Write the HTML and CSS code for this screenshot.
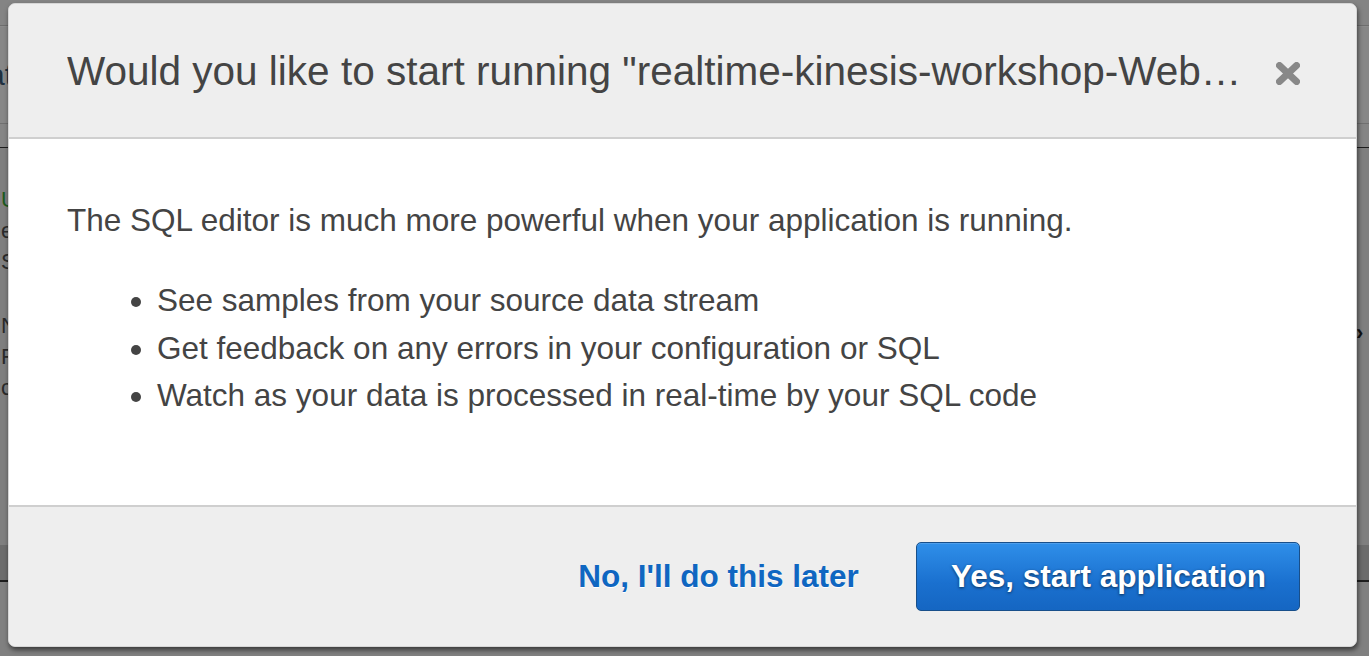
FILE: index.html
```html
<!DOCTYPE html>
<html>
<head>
<meta charset="utf-8">
<title>Start application</title>
<link rel="stylesheet" href="styles.css">
</head>
<body>
<div class="page">
  <div class="row row-top"></div>
  <div class="row row-nav"><span class="nav-text">at</span></div>
  <div class="row row-tabs"></div>
  <div class="row row-content">
    <div class="side-text">
      <div class="st green">Updated</div>
      <div class="st">edit</div>
      <div class="st">Source</div>
      <div class="st gap">Name</div>
      <div class="st">Format</div>
      <div class="st">column</div>
    </div>
    <span class="chev">›</span>
  </div>
  <div class="row row-band"></div>
  <div class="row row-bottom"></div>
</div>

<div class="modal" role="dialog">
  <div class="modal-header">
    <h2 class="modal-title">Would you like to start running "realtime-kinesis-workshop-WebAnalyticsApp"?</h2>
    <button class="close" aria-label="Close">
      <svg width="24" height="23" viewBox="0 0 24 23"><path d="M3.5 3.5 L20.5 19.5 M20.5 3.5 L3.5 19.5" stroke="#888" stroke-width="7" stroke-linecap="round"/></svg>
    </button>
  </div>
  <div class="modal-body">
    <p class="lead">The SQL editor is much more powerful when your application is running.</p>
    <ul class="points">
      <li>See samples from your source data stream</li>
      <li>Get feedback on any errors in your configuration or SQL</li>
      <li>Watch as your data is processed in real-time by your SQL code</li>
    </ul>
  </div>
  <div class="modal-footer">
    <a class="later" href="#">No, I'll do this later</a>
    <button class="primary">Yes, start application</button>
  </div>
</div>
</body>
</html>
```
FILE: styles.css
```css
html, body {
  margin: 0;
  padding: 0;
}
body {
  width: 1369px;
  height: 656px;
  overflow: hidden;
  background: #808080;
  font-family: "Liberation Sans", Arial, sans-serif;
  position: relative;
}
.page {
  display: flex;
  flex-direction: column;
}
.row {
  position: relative;
}
.row-top {
  height: 25px;
  background: #848484;
  border-bottom: 1px solid #6e6e6e;
}
.row-nav {
  height: 96px;
  background: #878787;
  border-top: 1px solid #8c8c8c;
  border-bottom: 1px solid #707070;
  display: flex;
  align-items: center;
}
.nav-text {
  font-size: 30px;
  color: #203040;
  margin-left: -12px;
}
.row-tabs {
  height: 23px;
  background: #858585;
  border-bottom: 1px solid #1e1e1e;
}
.row-content {
  height: 397px;
  background: #7f7f7f;
}
.side-text {
  display: flex;
  flex-direction: column;
  padding-top: 36px;
  margin-left: 1px;
  font-size: 22px;
  line-height: 31px;
  color: #2a2a2a;
}
.st.green { color: #1c5a1c; }
.st.gap { margin-top: 33px; }
.chev {
  position: absolute;
  left: 1356px;
  top: 172px;
  font-size: 22px;
  color: #111;
  font-weight: bold;
}
.row-band {
  height: 35px;
  background: #6c6c6c;
  border-bottom: 2px solid #1e1e1e;
}
.row-bottom {
  height: 80px;
  background: #808080;
}

/* Modal */
.modal {
  position: absolute;
  left: 8px;
  top: 3px;
  width: 1349px;
  height: 644px;
  box-sizing: border-box;
  border: 1px solid #d6d6d6;
  border-radius: 7px;
  background: #eeeeee;
  box-shadow: 1px 3px 5px rgba(0, 0, 0, 0.55);
  display: flex;
  flex-direction: column;
  overflow: hidden;
}
.modal-header {
  height: 133px;
  flex: none;
  display: flex;
  align-items: center;
  padding: 0 56px 0 58px;
  border-bottom: 2px solid #cfcfcf;
  background: #eeeeee;
  gap: 14px;
}
.modal-title {
  flex: 1;
  min-width: 0;
  margin: 0;
  font-weight: normal;
  font-size: 40.5px;
  color: #444;
  white-space: nowrap;
  overflow: hidden;
  text-overflow: ellipsis;
  padding-top: 2px;
}
.close {
  flex: none;
  border: 0;
  background: none;
  padding: 0;
  margin-top: 5px;
  width: 24px;
  height: 23px;
  display: flex;
}
.modal-body {
  flex: none;
  height: 366px;
  box-sizing: border-box;
  background: #ffffff;
  padding: 26px 58px 0 58px;
  font-size: 31.5px;
  line-height: 47.25px;
  color: #444;
}
.lead {
  margin: 31.5px 0 33.5px;
}
.points {
  margin: 33.5px 0 31.5px;
  padding-left: 90px;
}
.modal-footer {
  flex: 1;
  border-top: 2px solid #cfcfcf;
  background: #eeeeee;
  display: flex;
  align-items: center;
  justify-content: flex-end;
  padding: 0 56px 0 0;
  gap: 57px;
}
.later {
  font-size: 31.5px;
  font-weight: bold;
  color: #0f66c1;
  text-decoration: none;
  text-shadow: 0 1px 0 #fff;
  padding-top: 0;
}
.primary {
  height: 69px;
  box-sizing: border-box;
  padding: 0 33px 0 34px;
  border: 1px solid #184f8a;
  border-radius: 5px;
  background: linear-gradient(#2f8fe9, #1a70cf 60%, #1566c2);
  color: #fff;
  font-family: "Liberation Sans", Arial, sans-serif;
  font-size: 31.5px;
  font-weight: bold;
  text-shadow: 0 1px 3px rgba(0, 0, 0, 0.6);
  box-shadow: inset 0 1px 0 rgba(255, 255, 255, 0.15);
}
```
